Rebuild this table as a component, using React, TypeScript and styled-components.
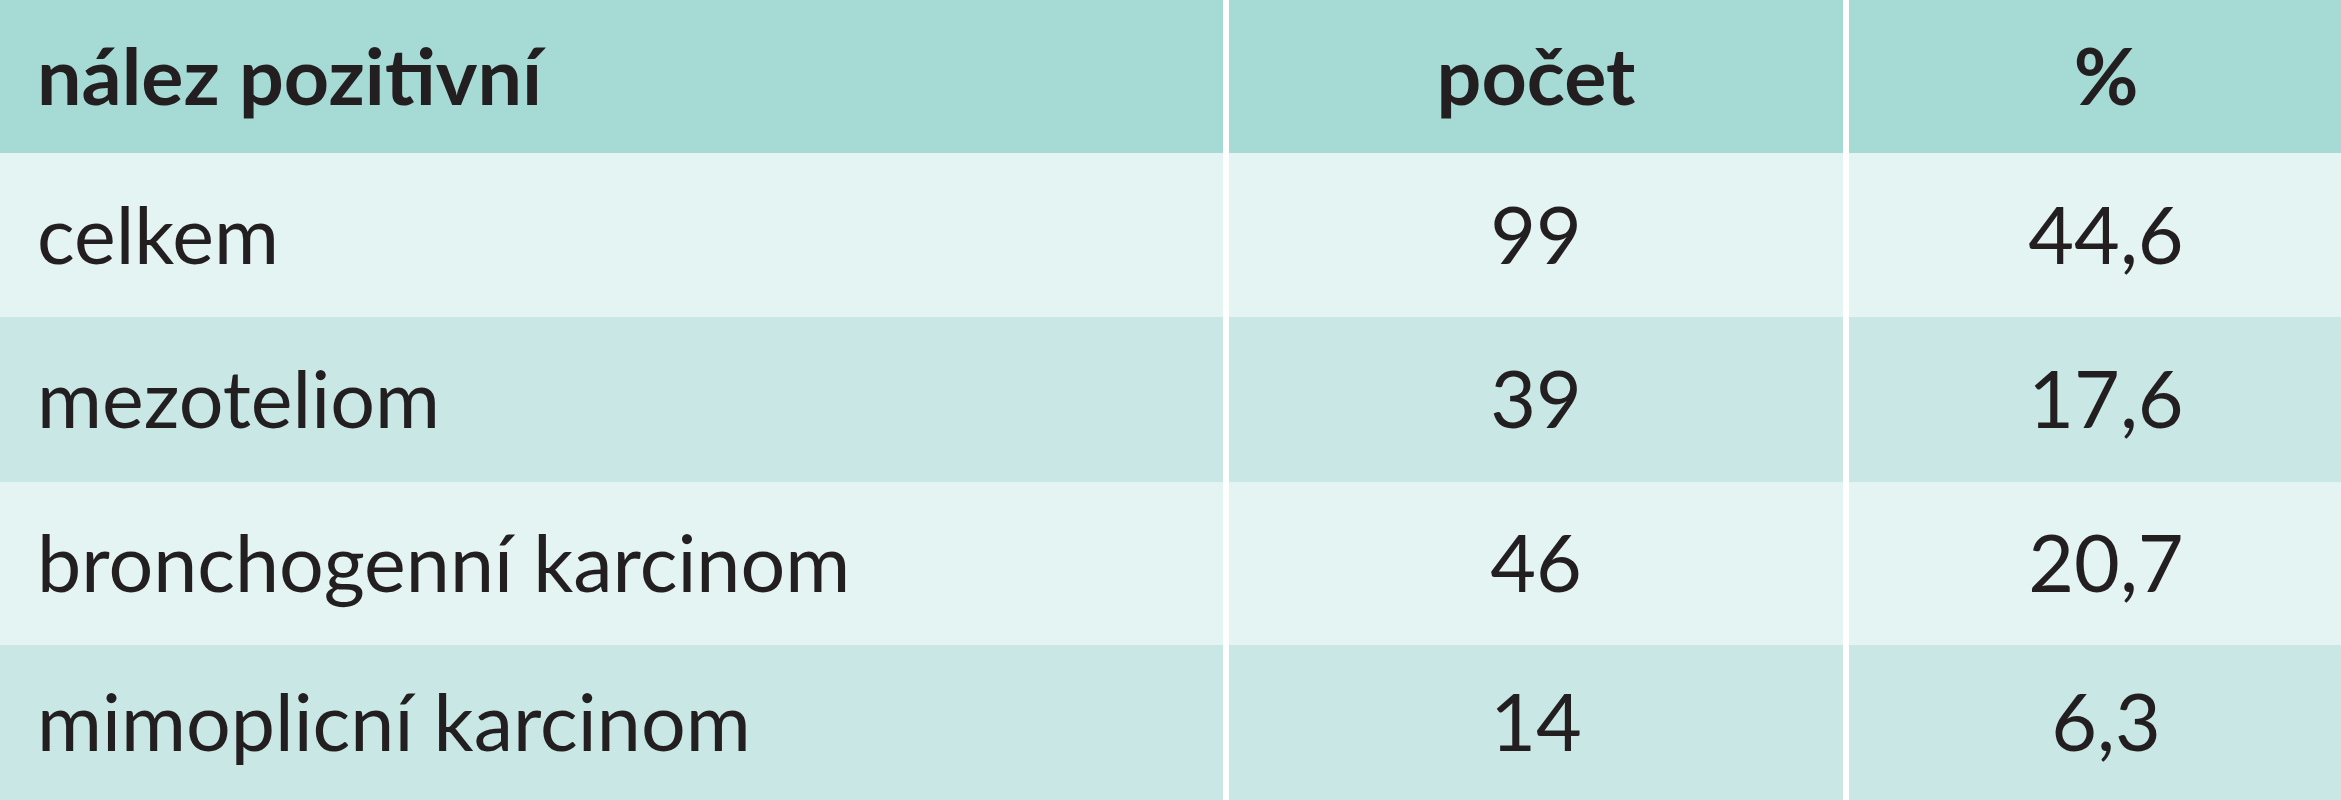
import React from "react";
import styled, { createGlobalStyle } from "styled-components";

const Global = createGlobalStyle`
  html, body { margin: 0; padding: 0; background: #ffffff; overflow: hidden; }
  body { font-family: "Lato", "Open Sans", sans-serif; color: #231f20; }
`;

type Tone = "head" | "light" | "dark";

const tones: Record<Tone, string> = {
  head: "#a6dad5",
  light: "#e3f4f2",
  dark: "#c9e8e5",
};

const Table = styled.div`
  display: flex;
  flex-direction: column;
  width: 2363px;
`;

const Row = styled.div<{ $h: number }>`
  display: grid;
  grid-template-columns: 1223px 614px 514px;
  column-gap: 6px;
  height: ${(p) => p.$h}px;
  background: #ffffff;
`;

const Cell = styled.div<{ $tone: Tone; $align?: "left" | "center"; $bold?: boolean }>`
  display: flex;
  align-items: center;
  justify-content: ${(p) => (p.$align === "center" ? "center" : "flex-start")};
  padding: 0 0 4px ${(p) => (p.$align === "center" ? "0" : "37px")};
  background: ${(p) => tones[p.$tone]};
  font-size: 79px;
  line-height: 1;
  font-weight: ${(p) => (p.$bold ? 700 : 400)};
  white-space: nowrap;
`;

const rows: { label: string; count: string; pct: string; h: number; tone: Tone }[] = [
  { label: "celkem", count: "99", pct: "44,6", h: 164, tone: "light" },
  { label: "mezoteliom", count: "39", pct: "17,6", h: 165, tone: "dark" },
  { label: "bronchogenní karcinom", count: "46", pct: "20,7", h: 163, tone: "light" },
  { label: "mimoplicní karcinom", count: "14", pct: "6,3", h: 155, tone: "dark" },
];

export default function App() {
  return (
    <>
      <Global />
      <Table>
        <Row $h={153}>
          <Cell $tone="head" $bold>nález pozitivní</Cell>
          <Cell $tone="head" $bold $align="center">počet</Cell>
          <Cell $tone="head" $bold $align="center">%</Cell>
        </Row>
        {rows.map((r) => (
          <Row key={r.label} $h={r.h}>
            <Cell $tone={r.tone}>{r.label}</Cell>
            <Cell $tone={r.tone} $align="center">{r.count}</Cell>
            <Cell $tone={r.tone} $align="center">{r.pct}</Cell>
          </Row>
        ))}
      </Table>
    </>
  );
}
